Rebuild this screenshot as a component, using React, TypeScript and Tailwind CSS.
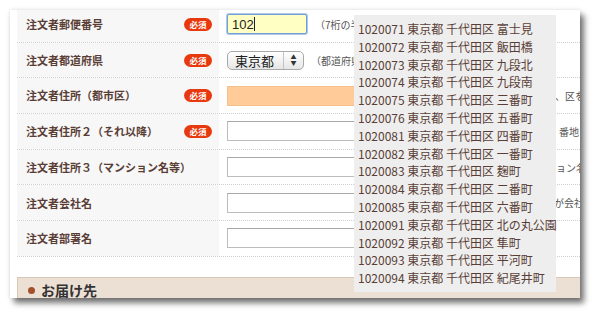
import React from "react";

const font = { fontFamily: '"Noto Sans CJK JP", "Liberation Sans", sans-serif' };

type Row = {
  label: string;
  required: boolean;
  field: "zip" | "pref" | "orange" | "text";
  hint: string;
  hintGap: string;
  width: string;
};

const rows: Row[] = [
  { label: "注文者郵便番号", required: true, field: "zip", hint: "（7桁の半角数字で入力）", hintGap: "ml-[8px]", width: "w-[80px]" },
  { label: "注文者都道府県", required: true, field: "pref", hint: "（都道府県を選択）", hintGap: "ml-[7px]", width: "w-[77px]" },
  { label: "注文者住所（都市区）", required: true, field: "orange", hint: "（市区町村名、区を省略せず入力）", hintGap: "ml-[8px]", width: "w-[260px]" },
  { label: "注文者住所２（それ以降）", required: true, field: "text", hint: "（町名、番地を入力）", hintGap: "ml-[32px]", width: "w-[260px]" },
  { label: "注文者住所３（マンション名等）", required: false, field: "text", hint: "（マンション名など）", hintGap: "ml-[29px]", width: "w-[260px]" },
  { label: "注文者会社名", required: false, field: "text", hint: "（ご注文者が会社の場合）", hintGap: "ml-[17px]", width: "w-[260px]" },
  { label: "注文者部署名", required: false, field: "text", hint: "", hintGap: "ml-[8px]", width: "w-[260px]" },
];

const suggestions = [
  ["1020071", "富士見"],
  ["1020072", "飯田橋"],
  ["1020073", "九段北"],
  ["1020074", "九段南"],
  ["1020075", "三番町"],
  ["1020076", "五番町"],
  ["1020081", "四番町"],
  ["1020082", "一番町"],
  ["1020083", "麹町"],
  ["1020084", "二番町"],
  ["1020085", "六番町"],
  ["1020091", "北の丸公園"],
  ["1020092", "隼町"],
  ["1020093", "平河町"],
  ["1020094", "紀尾井町"],
];

const Field: React.FC<{ row: Row }> = ({ row }) => {
  if (row.field === "zip") {
    return (
      <div className={`${row.width} h-[20px] rounded-[2px] border border-[#6f9fd6] bg-[#ffffc4] shadow-[0_0_0_1px_rgba(120,165,220,0.6)] flex items-center pl-[4px] text-[13px] text-[#222]`} style={{ fontFamily: '"Liberation Sans", sans-serif' }}>
        102<span className="inline-block w-px h-[14px] bg-[#222]" />
      </div>
    );
  }
  if (row.field === "pref") {
    return (
      <div className={`${row.width} h-[19px] rounded-[5px] border border-[#a9a9a9] bg-gradient-to-b from-white to-[#e6e6e6] flex items-center text-[13px] text-[#222]`}>
        <span className="flex-1 pl-[7px] leading-none">東京都</span>
        <span className="w-[20px] h-full border-l border-[#c4c4c4] flex flex-col items-center justify-center text-[6px] leading-[6px] text-[#333]">
          <span>▲</span>
          <span>▼</span>
        </span>
      </div>
    );
  }
  if (row.field === "orange") {
    return <div className={`${row.width} h-[20px] bg-[#ffcc99] border border-[#f3c08e]`} />;
  }
  return <div className={`${row.width} h-[20px] bg-white border border-[#bdbdbd] border-t-[#a8a8a8]`} />;
};

const App: React.FC = () => {
  return (
    <div className="relative w-[596px] h-[314px] bg-white overflow-hidden" style={font}>
      {/* window */}
      <div className="absolute left-[10px] top-[10px] w-[570px] h-[288px] bg-white overflow-hidden shadow-[4px_5px_6px_rgba(0,0,0,0.55),0_0_4px_rgba(0,0,0,0.12)]">
        <div className="pl-[7px] mt-[-3px]">
          {rows.map((row) => (
            <div key={row.label} className="flex h-[35.7px] border-b border-dotted border-[#cfcfcf]">
              <div className="w-[202px] shrink-0 bg-[#f7f7f7] flex items-center justify-between pl-[9px] pr-[7px]">
                <span className="text-[11px] font-bold text-[#5a3e36] whitespace-nowrap">{row.label}</span>
                {row.required && (
                  <span className="w-[28px] h-[13px] rounded-full bg-[#e8380d] text-white text-[8.5px] font-bold flex items-center justify-center leading-none">
                    必須
                  </span>
                )}
              </div>
              <div className="flex items-center pl-[8px] whitespace-nowrap">
                <Field row={row} />
                {row.hint && <span className={`${row.hintGap} text-[10px] text-[#555]`}>{row.hint}</span>}
              </div>
            </div>
          ))}
          <div className="mt-[20px] h-[26px] bg-[#ecdfd3] border-t border-l border-[#d9c8b7] flex items-center pl-[10px]">
            <span className="w-[7px] h-[7px] rounded-full bg-[#a3512c] mr-[6px]" />
            <span className="text-[14px] font-bold text-[#333]">お届け先</span>
          </div>
        </div>
      </div>

      {/* autocomplete popup */}
      <div className="absolute left-[354px] top-[15px] w-[202px] bg-[#eeeeee] py-[5px] pl-[4px]">
        {suggestions.map(([zip, town]) => (
          <div key={zip} className="text-[12px] leading-[17.8px] text-[#5a3e36] whitespace-nowrap">
            {zip} 東京都 千代田区 {town}
          </div>
        ))}
      </div>
    </div>
  );
};

export default App;
